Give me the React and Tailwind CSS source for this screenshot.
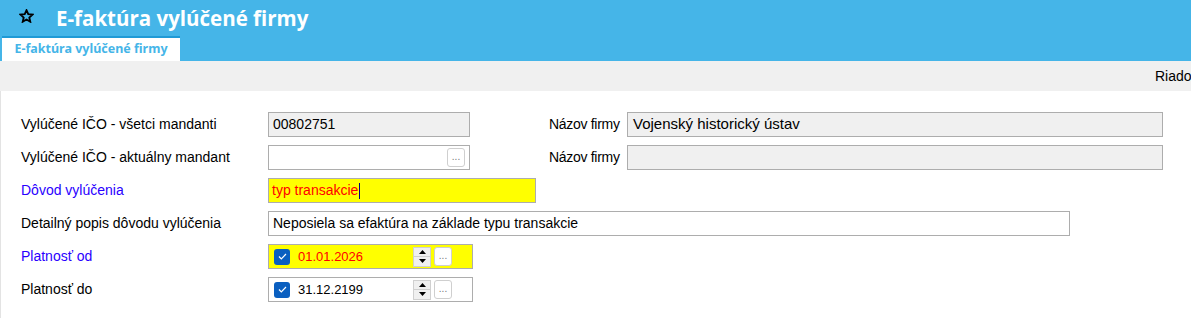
import React from 'react'

const font = { fontFamily: '"Liberation Sans", Arial, sans-serif' }

function Dots({ className = '' }) {
  return (
    <span className={`flex h-[19px] w-[18px] items-end justify-center rounded-[3px] border border-[#cfcfcf] bg-white pb-[4px] text-[10px] leading-none text-[#777] ${className}`}>
      ...
    </span>
  )
}

function Spinner() {
  return (
    <div className="flex h-[20px] w-[18px] flex-col border border-[#d0d0d0] bg-[#f0f0f0]">
      <div className="flex flex-1 items-center justify-center border-b border-[#d0d0d0]">
        <svg width="7" height="4" viewBox="0 0 7 4"><path d="M3.5 0L7 4H0z" fill="#000" /></svg>
      </div>
      <div className="flex flex-1 items-center justify-center">
        <svg width="7" height="4" viewBox="0 0 7 4"><path d="M0 0h7L3.5 4z" fill="#000" /></svg>
      </div>
    </div>
  )
}

function Check() {
  return (
    <span className="flex h-[16px] w-[16px] items-center justify-center rounded-[3px] bg-[#0a5fc0]">
      <svg width="9" height="7" viewBox="0 0 9 7"><path d="M1 3.5l2.3 2.3L8 1" fill="none" stroke="#fff" strokeWidth="1.2" /></svg>
    </span>
  )
}

function DateField({ value, highlight }) {
  return (
    <div className={`flex h-[25px] w-[205px] items-center border border-[#adadad] pl-[5px] pr-[20px] ${highlight ? 'bg-[#ffff00]' : 'bg-white'}`}>
      <Check />
      <span className={`ml-[8px] flex-1 text-[13px] ${highlight ? 'text-[#ff0000]' : 'text-black'}`}>{value}</span>
      <Spinner />
      <Dots className="ml-[3px]" />
    </div>
  )
}

function Row({ label, blue, children }) {
  return (
    <div className="flex h-[33px] items-center">
      <span className={`w-[247px] text-[14px] ${blue ? 'text-[#2a00ff]' : 'text-black'}`}>{label}</span>
      {children}
    </div>
  )
}

export default function App() {
  return (
    <div className="h-[318px] w-[1191px] overflow-hidden bg-white" style={font}>
      <header className="h-[61px] bg-[#45b5e8]">
        <div className="flex h-[36px] items-center">
          <span className="ml-[19px] w-[37px] pb-[4px]">
            <svg width="15" height="14" viewBox="0 0 24 23">
              <path d="M12 2l2.9 6.6 7.1.6-5.4 4.7 1.6 7L12 17.2 5.8 20.9l1.6-7L2 9.2l7.1-.6z" fill="none" stroke="#000" strokeWidth="3" strokeLinejoin="miter" />
            </svg>
          </span>
          <h1 className="text-[20.5px] font-bold leading-none text-white" style={{ fontFamily: '"Open Sans", sans-serif' }}>E-faktúra vylúčené firmy</h1>
        </div>
        <div className="ml-[2px] flex h-[25px] w-[178px] items-center justify-center border-t-2 border-[#1f9ad6] bg-white text-[12.5px] font-bold text-[#45b5e8]" style={{ fontFamily: '"Noto Sans", sans-serif' }}>
          E-faktúra vylúčené firmy
        </div>
      </header>
      <div className="flex h-[30px] items-center bg-[#f0f0f0]">
        <span className="ml-[1155px] whitespace-nowrap text-[14px] text-black">Riadok</span>
      </div>
      <main className="h-[227px] border-l border-[#e3e3e3] pl-[20px] pt-[17px]">
        <div className="flex">
          <div>
            <Row label="Vylúčené IČO - všetci mandanti">
              <div className="flex h-[25px] w-[202px] items-center border border-[#adadad] bg-[#f0f0f0] px-[4px] text-[14px]">00802751</div>
            </Row>
            <Row label="Vylúčené IČO - aktuálny mandant">
              <div className="flex h-[25px] w-[202px] items-center justify-end border border-[#adadad] bg-white pr-[4px]">
                <Dots />
              </div>
            </Row>
          </div>
          <div className="ml-[79px]">
            <div className="flex h-[33px] items-center">
              <span className="w-[78px] text-[14px] tracking-[-0.3px]">Názov firmy</span>
              <div className="flex h-[25px] w-[536px] items-center border border-[#adadad] bg-[#f0f0f0] px-[5px] text-[15px]">Vojenský historický ústav</div>
            </div>
            <div className="flex h-[33px] items-center">
              <span className="w-[78px] text-[14px] tracking-[-0.3px]">Názov firmy</span>
              <div className="h-[25px] w-[536px] border border-[#adadad] bg-[#f0f0f0]" />
            </div>
          </div>
        </div>
        <Row label="Dôvod vylúčenia" blue>
          <div className="flex h-[25px] w-[268px] items-center border border-[#adadad] bg-[#ffff00] px-[3px] text-[14px] text-[#ff0000]">
            typ transakcie<span className="ml-[1px] h-[16px] w-px bg-[#000080]" />
          </div>
        </Row>
        <Row label="Detailný popis dôvodu vylúčenia">
          <div className="flex h-[25px] w-[802px] items-center border border-[#adadad] bg-white px-[4px] text-[14px]">Neposiela sa efaktúra na základe typu transakcie</div>
        </Row>
        <Row label="Platnosť od" blue>
          <DateField value="01.01.2026" highlight />
        </Row>
        <Row label="Platnosť do">
          <DateField value="31.12.2199" />
        </Row>
      </main>
    </div>
  )
}
